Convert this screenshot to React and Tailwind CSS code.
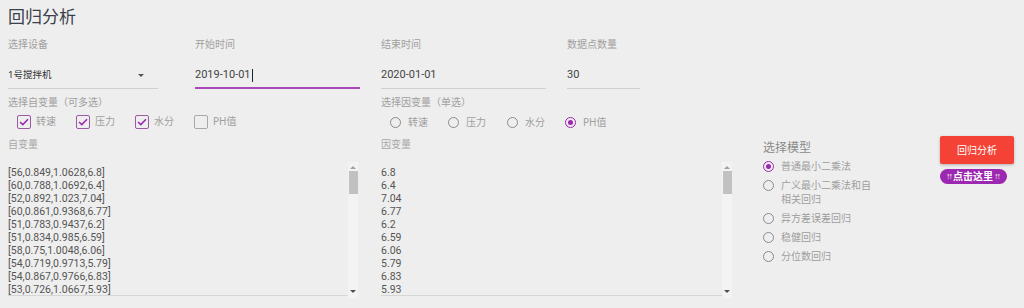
import React from 'react';

const FONT = { fontFamily: '"Noto Sans", "Noto Sans CJK SC", sans-serif' };
const NUM = { fontFamily: 'Roboto, "Noto Sans CJK SC", sans-serif' };

const xRows = [
  '[56,0.849,1.0628,6.8]',
  '[60,0.788,1.0692,6.4]',
  '[52,0.892,1.023,7.04]',
  '[60,0.861,0.9368,6.77]',
  '[51,0.783,0.9437,6.2]',
  '[51,0.834,0.985,6.59]',
  '[58,0.75,1.0048,6.06]',
  '[54,0.719,0.9713,5.79]',
  '[54,0.867,0.9766,6.83]',
  '[53,0.726,1.0667,5.93]',
  '[55,0.718,1.035,5.85]',
];
const yRows = ['6.8', '6.4', '7.04', '6.77', '6.2', '6.59', '6.06', '5.79', '6.83', '5.93', '5.85'];

function Checkbox({ label, checked }) {
  return (
    <div className="flex items-center w-[59px]">
      <div
        className={`w-[14px] h-[14px] rounded-[2px] border-[1.5px] flex items-center justify-center ${
          checked ? 'border-[#9c5aa3]' : 'border-[#a8a8a8]'
        }`}
      >
        {checked && (
          <svg width="10" height="8" viewBox="0 0 10 8">
            <path d="M1 4 L3.8 6.6 L9 1.2" fill="none" stroke="#9c27b0" strokeWidth="1.5" />
          </svg>
        )}
      </div>
      <span className="ml-[5px] text-[10px] text-[#9e9e9e]">{label}</span>
    </div>
  );
}

function Radio({ label, checked, w = 'w-[58px]' }) {
  return (
    <div className={`flex items-center ${w}`}>
      <div
        className={`w-[11px] h-[11px] shrink-0 rounded-full border-[1.5px] flex items-center justify-center ${
          checked ? 'border-[#9c27b0]' : 'border-[#8a8a8a]'
        }`}
      >
        {checked && <div className="w-[5px] h-[5px] rounded-full bg-[#9c27b0]" />}
      </div>
      <span className="ml-[7px] text-[10px] leading-[14px] text-[#9e9e9e]">{label}</span>
    </div>
  );
}

function DataBox({ rows, width }) {
  return (
    <div className={`relative ${width} h-[136px] mt-[11px]`}>
      <div className="absolute left-0 right-[10px] top-0 bottom-[2px] overflow-hidden border-b border-[#d6d6d6]">
        <div className="pt-[4px] text-[10.5px] leading-[13px] text-[#555]" style={NUM}>
          {rows.map((r, i) => (
            <div key={i}>{r}</div>
          ))}
        </div>
      </div>
      {/* scrollbar */}
      <div className="absolute right-0 top-0 bottom-0 w-[10px] bg-[#f3f3f3] flex flex-col items-center">
        <svg width="6" height="4" viewBox="0 0 6 4" className="mt-[3px]">
          <path d="M0 4 L3 1 L6 4 Z" fill="#a0a0a0" />
        </svg>
        <div className="w-[9px] h-[23px] bg-[#c1c1c1] mt-[2px]" />
        <div className="flex-1" />
        <svg width="6" height="4" viewBox="0 0 6 4" className="mb-[4px]">
          <path d="M0 0 L6 0 L3 3 Z" fill="#505050" />
        </svg>
      </div>
    </div>
  );
}

export default function App() {
  return (
    <div className="w-[1024px] h-[308px] bg-[#eeeeee] overflow-hidden relative px-[8px]" style={FONT}>
      <h1 className="pt-[5px] text-[17px] leading-[24px] text-[#3a3f4a]">回归分析</h1>

      {/* top form row */}
      <div className="flex mt-[8px]">
        <div className="w-[187px] shrink-0">
          <div className="text-[10px] leading-[14px] text-[#a0a0a0]">选择设备</div>
          <div className="w-[150px] h-[27px] mt-[11px] border-b border-[#cfcfcf] flex items-center justify-between pr-[14px]">
            <span className="text-[9.5px] text-[#333]">1号搅拌机</span>
            <svg width="6" height="3" viewBox="0 0 6 3">
              <path d="M0 0 L6 0 L3 3 Z" fill="#555" />
            </svg>
          </div>
        </div>
        <div className="w-[186px] shrink-0">
          <div className="text-[10px] leading-[14px] text-[#a0a0a0]">开始时间</div>
          <div className="w-[165px] h-[27px] mt-[11px] border-b-2 border-[#ab47bc] flex items-center pt-[2px]">
            <span className="text-[11px] text-[#444]" style={NUM}>2019-10-01</span>
            <span className="w-px h-[13px] bg-[#222] ml-[1px]" />
          </div>
        </div>
        <div className="w-[186px] shrink-0">
          <div className="text-[10px] leading-[14px] text-[#a0a0a0]">结束时间</div>
          <div className="w-[165px] h-[27px] mt-[11px] border-b border-[#cfcfcf] flex items-center">
            <span className="text-[11px] text-[#444]" style={NUM}>2020-01-01</span>
          </div>
        </div>
        <div className="w-[73px] shrink-0">
          <div className="text-[10px] leading-[14px] text-[#a0a0a0]">数据点数量</div>
          <div className="w-[73px] h-[27px] mt-[11px] border-b border-[#cfcfcf] flex items-center">
            <span className="text-[11px] text-[#444]" style={NUM}>30</span>
          </div>
        </div>
      </div>

      {/* variable selections */}
      <div className="flex mt-[6px]">
        <div className="w-[373px] shrink-0">
          <div className="text-[10px] leading-[14px] text-[#a0a0a0]">选择自变量（可多选）</div>
          <div className="flex pl-[9px] mt-[5px]">
            <Checkbox label="转速" checked />
            <Checkbox label="压力" checked />
            <Checkbox label="水分" checked />
            <Checkbox label="PH值" />
          </div>
        </div>
        <div>
          <div className="text-[10px] leading-[14px] text-[#a0a0a0]">选择因变量（单选）</div>
          <div className="flex pl-[9px] mt-[6px]">
            <Radio label="转速" />
            <Radio label="压力" w="w-[59px]" />
            <Radio label="水分" />
            <Radio label="PH值" checked />
          </div>
        </div>
      </div>

      {/* data + models */}
      <div className="flex mt-[8px]">
        <div className="w-[373px] shrink-0">
          <div className="text-[10px] leading-[14px] text-[#a8a8a8]">自变量</div>
          <DataBox rows={xRows} width="w-[350px]" />
        </div>
        <div className="w-[382px] shrink-0">
          <div className="text-[10px] leading-[14px] text-[#a8a8a8]">因变量</div>
          <DataBox rows={yRows} width="w-[351px]" />
        </div>
        <div className="w-[177px] shrink-0 pt-[3px]">
          <div className="text-[12px] leading-[16px] text-[#8a8a8a]">选择模型</div>
          <div className="flex flex-col gap-[5px] mt-[3px]">
            <Radio label="普通最小二乘法" checked w="w-full" />
            <div className="flex items-start">
              <div className="w-[11px] h-[11px] mt-[2px] rounded-full border-[1.5px] border-[#8a8a8a] shrink-0" />
              <span className="ml-[7px] text-[10px] leading-[14px] w-[92px] text-[#9e9e9e]">
                广义最小二乘法和自相关回归
              </span>
            </div>
            <Radio label="异方差误差回归" w="w-full" />
            <Radio label="稳健回归" w="w-full" />
            <Radio label="分位数回归" w="w-full" />
          </div>
        </div>
        <div className="flex flex-col items-start shrink-0 -mt-[1px]">
          <button className="w-[74px] h-[28px] bg-[#f44336] rounded-[2px] text-white text-[10px] shadow-[0_1px_3px_rgba(0,0,0,0.25)]">
            回归分析
          </button>
          <span className="mt-[5px] h-[15px] px-[6px] rounded-full bg-[#9c27b0] text-white text-[10px] leading-[15px] font-bold whitespace-nowrap flex items-center">
            <span className="tracking-[-2px] text-[9px] mr-[2px]" style={{ fontFamily: '"Liberation Sans", sans-serif' }}>↑↑</span>
            点击这里
            <span className="tracking-[-2px] text-[9px] ml-[1px] mr-[2px]" style={{ fontFamily: '"Liberation Sans", sans-serif' }}>↑↑</span>
          </span>
        </div>
      </div>
    </div>
  );
}
